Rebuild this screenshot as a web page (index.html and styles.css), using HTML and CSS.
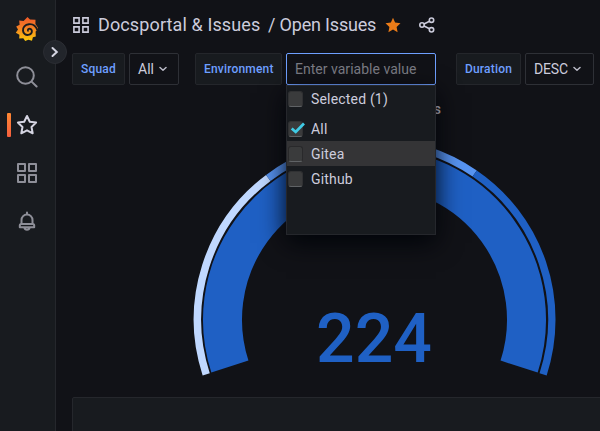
FILE: index.html
```
<!DOCTYPE html>
<html lang="en">
<head>
<meta charset="utf-8">
<title>Open Issues</title>
<link rel="stylesheet" href="styles.css">
</head>
<body>
<div class="app">
  <nav class="sidebar">
    <svg class="logo" width="24" height="26" viewBox="0 0 24 26">
      <defs><linearGradient id="flame" x1="0" y1="0" x2="0" y2="1"><stop offset="0" stop-color="#f05a28"/><stop offset=".4" stop-color="#f37a26"/><stop offset="1" stop-color="#fbca0a"/></linearGradient></defs>
      <path fill="url(#flame)" d="M12.500 1 15 3.500 20.500 3.800 20.400 8 22.800 11.500 22.300 14 20.600 15.500 20.800 20.400 17.900 21.300 17 24.800 13.300 23.700 10.200 25 8.300 22.300 4.200 22.400 4.400 18.700.8 16.800 3 13.600 1.200 10.500 4.600 8.800 4.200 4.400 8.600 4.900Z"/>
      <path class="swirl" d="M22.500 14.500C21 10 17.700 7.800 13.900 8.200C10 8.700 7.800 11.500 8 14.600C8.200 17.500 10.600 19.200 13.300 18.900C15.900 18.600 17.300 16.500 16.800 14.500C16.300 12.700 14.300 12.200 13.300 13.200C12.700 13.900 12.900 14.800 13.600 15"/>
    </svg>
    <svg class="ico" width="22" height="22" viewBox="0 0 22 22"><circle cx="9.500" cy="9.500" r="8.300"/><path d="m15.600 15.600 5 4.900"/></svg>
    <div class="active">
      <svg class="ico bright" width="22" height="22" viewBox="0 0 22 22"><path d="m11 2 2.800 5.800 6.300.8-4.600 4.400 1.200 6.300-5.700-3-5.700 3 1.200-6.300L1.900 8.600l6.300-.8Z"/></svg>
    </div>
    <svg class="ico" width="22" height="22" viewBox="0 0 22 22"><path d="M2 2h7v7H2zM13 2h7v7h-7zM2 13h7v7H2zM13 13h7v7h-7z"/></svg>
    <svg class="ico" width="22" height="22" viewBox="0 0 22 22"><path d="M11 2.500v2M5.500 14v-4a5.500 5.500 0 0 1 11 0v4M5.300 14h11.400q1.500 0 1.500 1.500v1.700H3.800v-1.700q0-1.500 1.500-1.500ZM8.300 17.500c.6 3 4.800 3 5.400 0"/></svg>
    <button class="expand"><svg width="10" height="12" viewBox="0 0 10 12"><path d="m2.500 2 4.300 4-4.300 4"/></svg></button>
  </nav>
  <main class="main">
    <header class="title">
      <svg class="apps" width="16" height="16" viewBox="0 0 16 16"><path d="M.9.900h5.200v5.200H.9zM9.900.9h5.200v5.200H9.900zM.9 9.900h5.200v5.200H.9zM9.900 9.900h5.200v5.200H9.900z"/></svg>
      <span class="folder">Docsportal &amp; Issues</span><span class="dash">/ Open Issues</span>
      <svg class="fav" width="16" height="16" viewBox="0 0 16 16"><path d="m8 .8 2.100 4.800 5.400.6-3.900 3.700 1 5.300L8 12.600l-4.600 2.600 1-5.300L.5 6.200l5.400-.6Z"/></svg>
      <svg class="share" width="16" height="16" viewBox="0 0 16 16"><circle cx="3" cy="8" r="2.200"/><circle cx="12.500" cy="3.200" r="2.200"/><circle cx="12.500" cy="12.800" r="2.200"/><path d="m5 7 5.500-2.800M5 9l5.500 2.800"/></svg>
    </header>
    <div class="vars">
      <div class="var squad"><label>Squad</label><button>All<svg width="8" height="6" viewBox="0 0 8 6"><path d="m1 1.500 3 2.700 3-2.700"/></svg></button></div>
      <div class="var env"><label>Environment</label>
        <div class="picker"><input placeholder="Enter variable value">
          <ul class="menu">
            <li class="head"><i class="box"></i>Selected (1)</li>
            <li><i class="box"><svg width="16" height="14" viewBox="0 0 16 14"><path d="m1.700 7.500 4 3.500L14 2.500"/></svg></i>All</li>
            <li class="hover"><i class="box"></i>Gitea</li>
            <li><i class="box"></i>Github</li>
          </ul>
        </div>
      </div>
      <div class="var duration"><label>Duration</label><button>DESC<svg width="8" height="6" viewBox="0 0 8 6"><path d="m1 1.500 3 2.700 3-2.700"/></svg></button></div>
    </div>
    <section class="gauge">
      <h2>s</h2>
      <svg width="605" height="272" viewBox="72 117 605 272">
        <g fill="none">
          <path stroke="#1f60c4" stroke-width="39" d="M229.900 366.600A152 152 0 1 1 519.100 366.600"/>
          <g stroke-width="7.500">
            <path stroke="#c0d8ff" d="M206.200 374.300A177 177 0 0 1 268.300 177.900"/>
            <path stroke="#5794f2" d="M268.300 177.900A177 177 0 0 1 474.700 173.500"/>
            <path stroke="#1f60c4" d="M474.700 173.500A177 177 0 0 1 543.100 374.300"/>
          </g>
        </g>
        <text x="374" y="362">224</text>
      </svg>
    </section>
    <section class="panel"></section>
  </main>
</div>
</body>
</html>
```
FILE: styles.css
```
* { box-sizing: border-box; }
body { margin: 0; background: #111217; color: #ccccdc; font-family: Roboto, "Liberation Sans", sans-serif; font-size: 14px; overflow: hidden; }
svg { display: block; flex: none; }
.app { display: flex; width: 600px; height: 431px; overflow: hidden; }
.sidebar { position: relative; flex: none; width: 56px; background: #181b1f; border-right: 1px solid #25272c; display: flex; flex-direction: column; align-items: center; padding: 16px 1px 0 0; z-index: 2; }
.logo { margin-bottom: 24px; }
.swirl { fill: none; stroke: #181b1f; stroke-width: 1.900; }
.ico { fill: none; stroke: #8e8f98; stroke-width: 2; stroke-linejoin: round; stroke-linecap: round; margin-bottom: 26px; }
.bright { stroke: #d5d5e2; }
.active { align-self: stretch; display: flex; justify-content: center; position: relative; }
.active::before { content: ""; position: absolute; left: 7px; top: -1px; width: 4px; height: 24px; border-radius: 1px; background: linear-gradient(#ff8833, #f55f3e); }
.expand { position: absolute; left: 43px; top: 40px; width: 24px; height: 24px; border: 1px solid #2b2d33; border-radius: 50%; background: #22252b; padding: 0; display: flex; align-items: center; justify-content: center; }
.expand path { fill: none; stroke: #d5d5e2; stroke-width: 2; stroke-linecap: round; }
.main { flex: none; width: 621px; padding-left: 16px; }
.title { display: flex; align-items: center; height: 49px; font-size: 18px; white-space: nowrap; }
.apps, .share { fill: none; stroke: #ccccdc; stroke-width: 1.600; }
.apps { margin: 0 9px 0 1px; }
.folder { width: 162px; letter-spacing: .12px; }
.dash { width: 109px; margin-left: 8px; letter-spacing: -.18px; }
.fav { margin-left: 8px; fill: #eb7b18; }
.share { margin-left: 18px; }
.vars { display: flex; gap: 16px; margin-top: 4px; height: 32px; }
.var { display: flex; gap: 4px; }
.squad { width: 107px; }
.env { width: 245px; }
.var label { flex: none; height: 32px; padding: 0 8px; line-height: 30px; background: #181b1f; border: 1px solid #24262b; border-radius: 2px; color: #6e9fff; font-size: 12px; font-weight: 500; letter-spacing: .18px; }
.squad label { width: 53px; }
.env label { width: 87px; }
.duration label { width: 65px; }
.var button { height: 32px; padding: 0 0 0 8px; display: flex; align-items: center; gap: 5px; border: 1px solid #2e3036; border-radius: 2px; background: #111217; color: #ccccdc; font: 14px Roboto, sans-serif; }
.squad button { width: 50px; }
.duration button { width: 69px; letter-spacing: -.15px; }
.var button path { fill: none; stroke: #bbbbc8; stroke-width: 1.500; stroke-linecap: round; stroke-linejoin: round; }
.picker { position: relative; flex: none; width: 150px; }
.picker input { display: block; width: 150px; height: 32px; padding: 0 8px; border: 1px solid #6e9fff; border-radius: 2px; background: #111217; font: 14px Roboto, sans-serif; letter-spacing: .02px; outline: none; }
.picker input::placeholder { color: #7b7c84; opacity: 1; }
.menu { position: absolute; left: 0; top: 32px; width: 150px; height: 150px; margin: 0; padding: 0; list-style: none; background: #181b1f; border: 1px solid #25272c; box-shadow: 0 8px 24px #010409; z-index: 3; letter-spacing: .18px; }
.menu li { height: 25px; display: flex; align-items: center; gap: 9px; }
.menu li.head { margin-bottom: 5px; }
.menu .hover { background: #343436; }
.box { width: 15px; height: 16px; margin-left: 1px; margin-right: -1px; background: #3a3b3c; border: 1px solid #303133; border-bottom-color: #606366; border-radius: 3px; }
.box svg { margin: -1px 0 0 1px; }
.box path { fill: none; stroke: #40cbe5; stroke-width: 2.700; }
.hover .box { border-color: #29292b; border-bottom-color: #606366; }
.gauge { width: 605px; margin-top: 8px; height: 296px; }
.gauge h2 { margin: 0; height: 24px; padding: 8px 236px 0 0; text-align: right; font-size: 14px; line-height: 16px; font-weight: 500; }
.gauge text { fill: #1f60c4; font-size: 68px; font-weight: 500; text-anchor: middle; }
.panel { margin-top: 8px; width: 605px; height: 80px; background: #181b1f; border: 1px solid #25272c; border-radius: 2px; }
```
